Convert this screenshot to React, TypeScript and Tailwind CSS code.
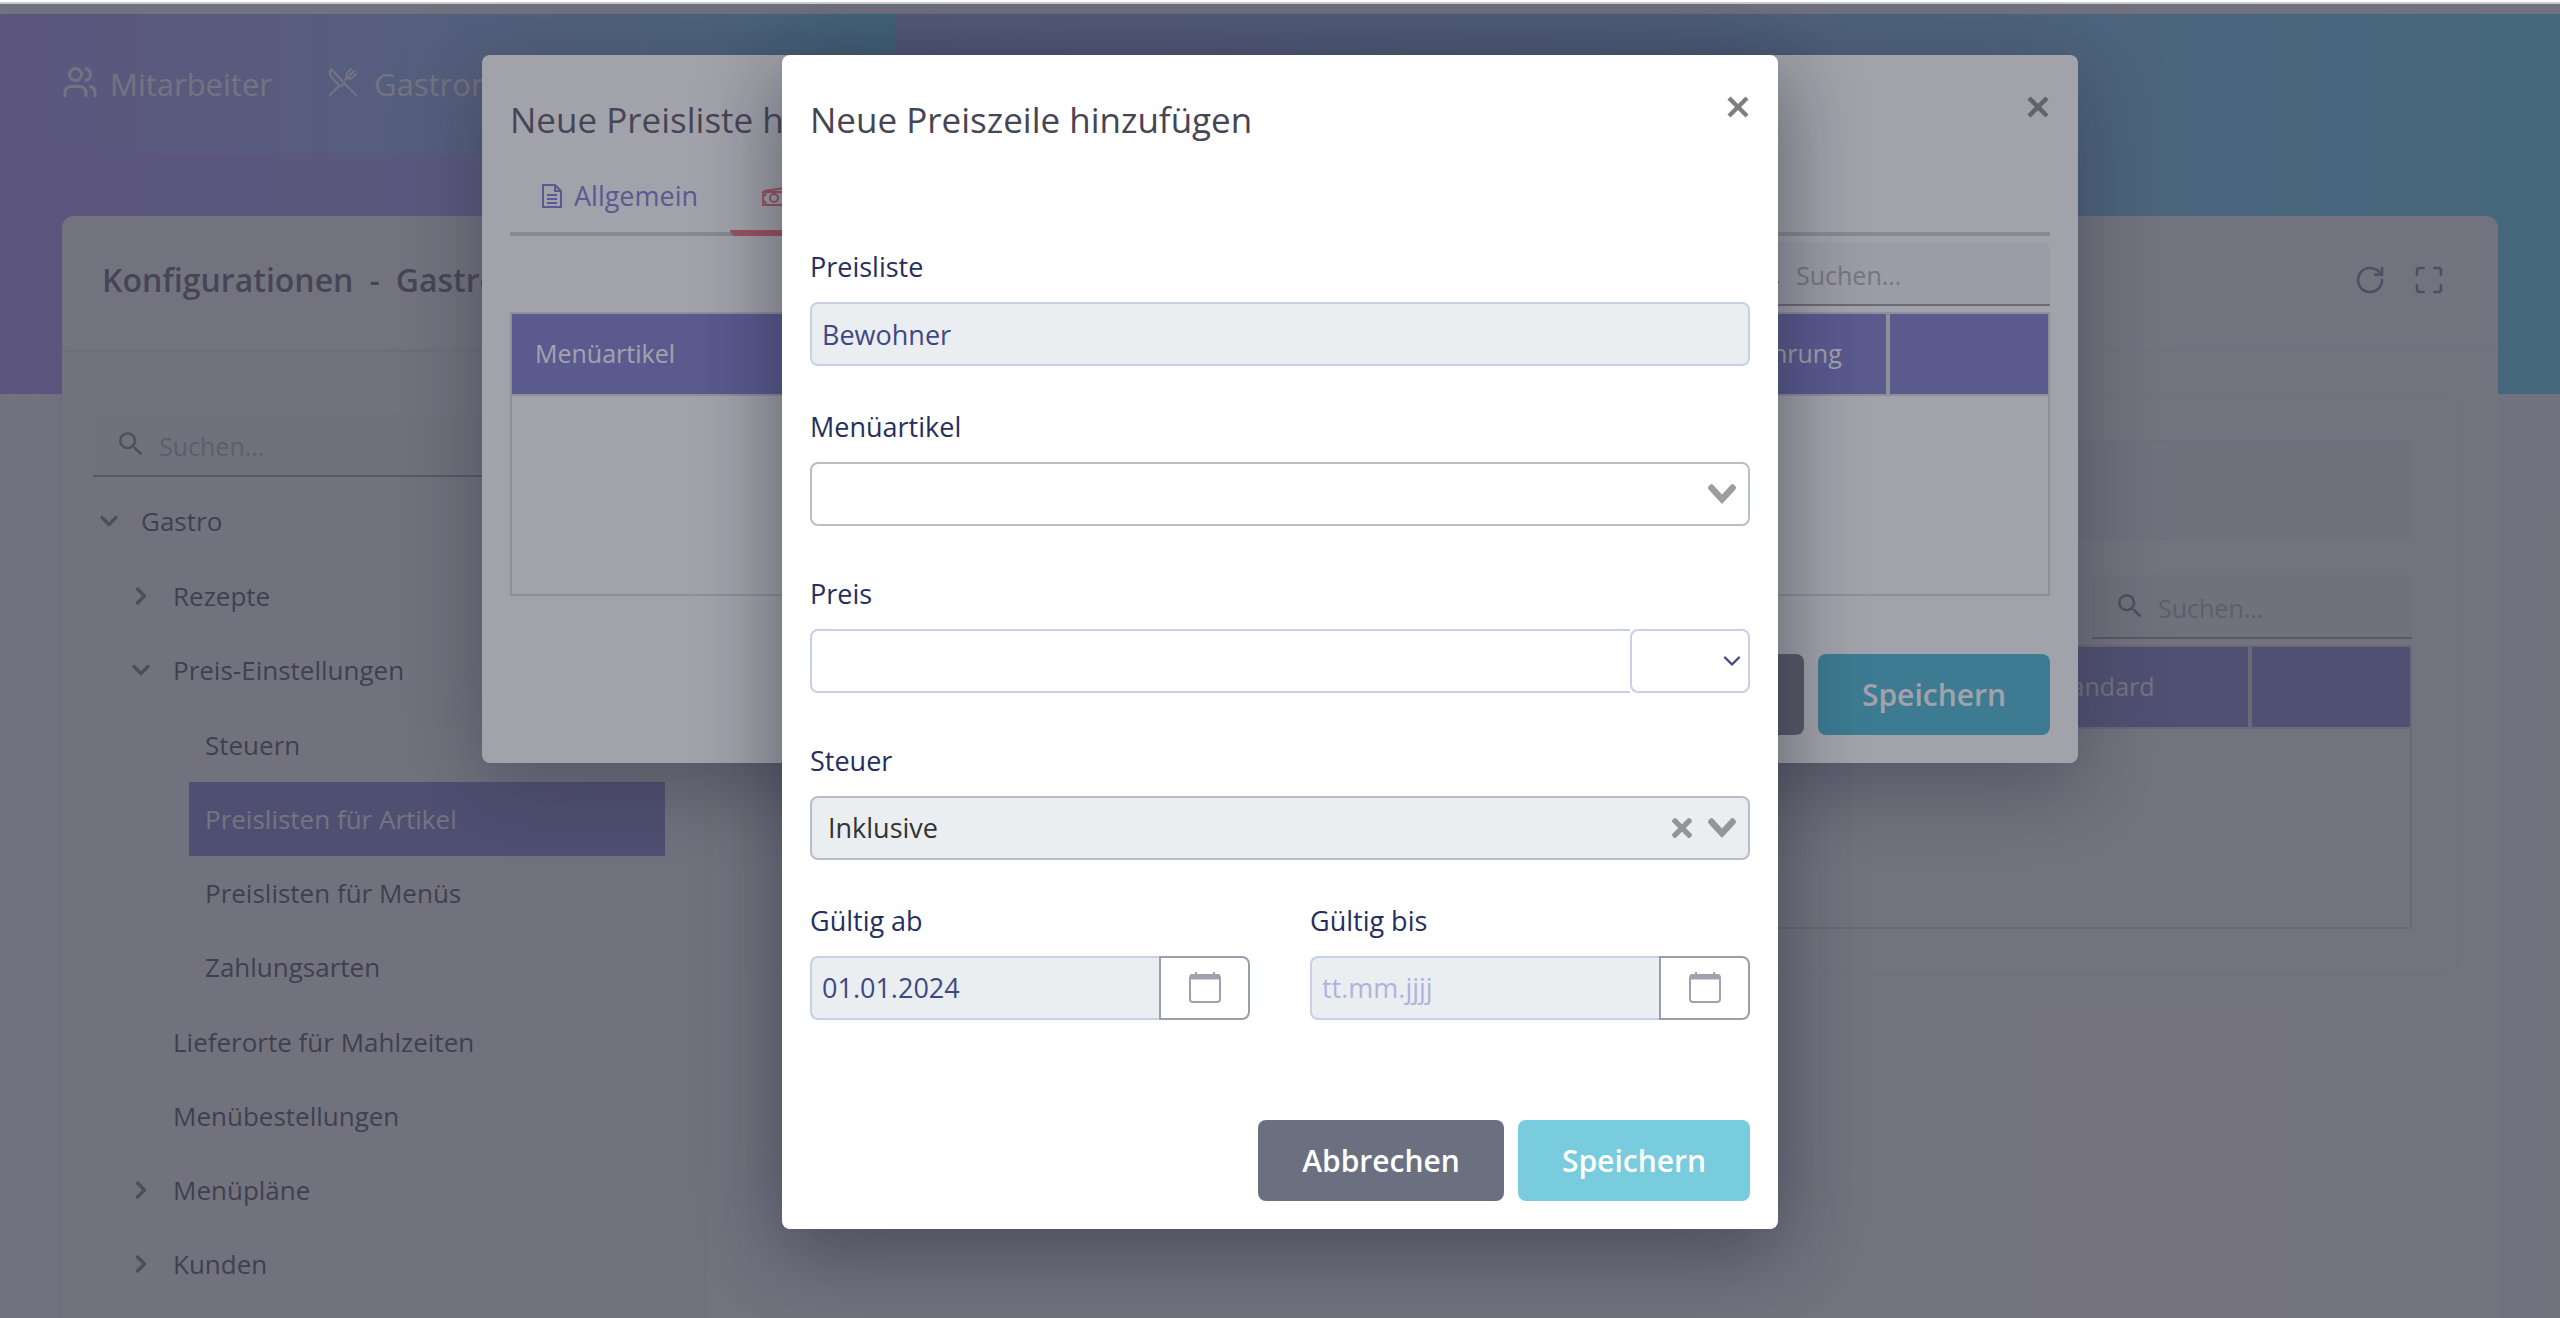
import React from 'react';
import { ChevronDown, ChevronRight, Maximize, RotateCw, Users, X } from 'lucide-react';
import { MdSearch } from 'react-icons/md';

type TreeNode = {
    label: string;
    open?: boolean;
    branch?: boolean;
    selected?: boolean;
    children?: TreeNode[];
};

const tree: TreeNode[] = [
    {
        label: 'Gastro',
        branch: true,
        open: true,
        children: [
            { label: 'Rezepte', branch: true },
            {
                label: 'Preis-Einstellungen',
                branch: true,
                open: true,
                children: [
                    { label: 'Steuern' },
                    { label: 'Preislisten für Artikel', selected: true },
                    { label: 'Preislisten für Menüs' },
                    { label: 'Zahlungsarten' },
                ],
            },
            { label: 'Lieferorte für Mahlzeiten' },
            { label: 'Menübestellungen' },
            { label: 'Menüpläne', branch: true },
            { label: 'Kunden', branch: true },
        ],
    },
];

/* Icons */

function CutleryIcon() {
    return (
        <svg width="30" height="30" viewBox="0 0 30 30" fill="none" stroke="currentColor" strokeWidth="2" strokeLinecap="round" strokeLinejoin="round">
            <path d="M3 2C1 5 2 9 5 12L12 19L17 17Z" />
            <path d="M11 19L2 28M17 17L28 28" />
            <path d="M17 13L19 11C18 9 18 7 20 5L23 2M21 9L26 4M19 11C21 12 23 12 25 10L28 7" />
        </svg>
    );
}

function FileIcon() {
    return (
        <svg width="20" height="24" viewBox="0 0 20 24" fill="none" stroke="currentColor" strokeWidth="2">
            <path d="M1 1H13L19 7V23H1Z" />
            <path d="M13 1V7H19M5 11H15M5 15H15M5 19H15" />
        </svg>
    );
}

function MoneyIcon() {
    return (
        <svg width="36" height="20" viewBox="0 0 36 20" fill="none" stroke="currentColor" strokeWidth="2">
            <path d="M1 6H31V19H1Z" />
            <circle cx="12" cy="12" r="4" />
            <path d="M1 10C3 10 4 8 4 6M1 15C3 15 4 17 4 19M2 5L30 1L31 6" />
        </svg>
    );
}

function CalendarIcon() {
    return (
        <svg width="32" height="32" viewBox="0 0 32 32" fill="none" stroke="currentColor" strokeWidth="2">
            <rect x="1" y="3" width="30" height="27" rx="3" />
            <path d="M1 5H31" strokeWidth="5" />
            <path d="M7 0V4M25 0V4" />
        </svg>
    );
}

function SelectArrow() {
    return (
        <svg width="28" height="20" viewBox="0 0 14 10" fill="currentColor">
            <path d="M9.211364 7.59931l4.48338-4.867229c.407008-.441854.407008-1.158247 0-1.60046l-.73712-.80023c-.407008-.441854-1.066904-.441854-1.474243 0L7 5.198617 2.51662.33139c-.407008-.441853-1.066904-.441853-1.474243 0l-.737121.80023c-.407008.441854-.407008 1.158248 0 1.600461l4.48338 4.867228L7 10l2.211364-2.40069z" />
        </svg>
    );
}

function ClearIcon() {
    return (
        <svg width="20" height="20" viewBox="0 0 10 10" fill="currentColor">
            <path d="M6.895455 5l2.842897-2.842898c.348864-.348863.348864-.914488 0-1.263636L9.106534.261648c-.348864-.348864-.914489-.348864-1.263636 0L5 3.104545 2.157102.261648c-.348863-.348864-.914488-.348864-1.263636 0L.261648.893466c-.348864.348864-.348864.914489 0 1.263636L3.104545 5 .261648 7.842898c-.348864.348863-.348864.914488 0 1.263636l.631818.631818c.348864.348864.914773.348864 1.263636 0L5 6.895455l2.842898 2.842897c.348863.348864.914772.348864 1.263636 0l.631818-.631818c.348864-.348864.348864-.914489 0-1.263636L6.895455 5z" />
        </svg>
    );
}

/* Shared pieces */

function SearchBox({ className = '' }: { className?: string }) {
    return (
        <label className={`flex h-16 items-center gap-3 rounded-t-lg border-b-2 border-[#8d9098] bg-[#f0f2f5] pl-[22px] text-[#6c6e76] ${className}`}>
            <MdSearch size={32} className="shrink-0" />
            <input type="search" placeholder="Suchen..." aria-label="Suchen" className="w-full min-w-0 bg-transparent pt-1.5 text-[25px] outline-none placeholder:text-[#a3a6ac]" />
        </label>
    );
}

function DataTable({ columns }: { columns: { label: string; width: string }[] }) {
    return (
        <div className="mt-1.5 border-2 border-[#d5d8dc]">
            <table className="w-full table-fixed border-separate border-spacing-0 text-left">
                <thead>
                    <tr>
                        {columns.map((column, i) => (
                            <th
                                key={i}
                                className={`h-20 border-[#d5d8dc] bg-[#6f6ec9] px-[23px] text-[25px] font-normal text-white ${column.width} ${i < columns.length - 1 && i > 0 ? 'border-r-4' : ''}`}
                            >
                                {column.label}
                            </th>
                        ))}
                    </tr>
                </thead>
                <tbody>
                    <tr>
                        <td colSpan={columns.length} className="h-50 border-t-2 border-[#d5d8dc]" />
                    </tr>
                </tbody>
            </table>
        </div>
    );
}

function Modal({ title, width, children }: { title: string; width: string; children: React.ReactNode }) {
    return (
        <div className="absolute inset-0 flex items-start justify-center overflow-hidden bg-[#464555]/50 pt-[51px]">
            <section role="dialog" aria-label={title} className={`w-full rounded-lg bg-white pb-7 shadow-[0_30px_70px_rgba(40,40,60,0.28),0_10px_90px_rgba(20,20,35,0.28)] ${width}`}>
                <header className="flex items-start justify-between pt-[34px] pr-[22px] pl-7">
                    <h2 className="mt-[7px] text-[35px] leading-12 text-[#464555]">{title}</h2>
                    <button type="button" aria-label="Schließen" className="text-[#7f7f7f]">
                        <X size={36} strokeWidth={3} strokeLinecap="butt" />
                    </button>
                </header>
                <div className="px-7">{children}</div>
            </section>
        </div>
    );
}

function ModalActions({ disabled = false }: { disabled?: boolean }) {
    return (
        <footer className="flex justify-end gap-3.5 text-[30px] font-semibold text-white">
            <button type="button" className="h-[81px] w-[246px] rounded-lg bg-[#6b7080]">Abbrechen</button>
            <button type="submit" disabled={disabled} className="h-[81px] w-[232px] rounded-lg bg-[#33b1cc] disabled:opacity-65">Speichern</button>
        </footer>
    );
}

function Tree({ nodes }: { nodes: TreeNode[] }) {
    return (
        <ul className="py-px">
            {nodes.map((node) => (
                <li key={node.label}>
                    <div className="flex h-[74px]">
                        <span className="flex w-8 items-center justify-center text-[#62646e]">
                            {node.branch && (node.open ? <ChevronDown size={28} strokeWidth={3} /> : <ChevronRight size={28} strokeWidth={3} />)}
                        </span>
                        <button
                            type="button"
                            className={`flex-1 pl-4 text-left text-[26px] ${node.selected ? 'bg-[#6c6cc6] text-white' : 'text-[#2a2e3c]'}`}
                        >
                            {node.label}
                        </button>
                    </div>
                    {node.children && (
                        <div className="pl-8">
                            <Tree nodes={node.children} />
                        </div>
                    )}
                </li>
            ))}
        </ul>
    );
}

/* Page behind the dialogs */

function ConfigurationPage() {
    return (
        <div className="bg-[#f5f7fb] pt-2.5">
            <div className="h-[380px] bg-linear-to-r from-[#a285f9] to-[#3ecdf1]">
                <nav className="flex h-[140px] w-[35%] items-center gap-14 bg-linear-to-r from-[#a285f9] to-[#3ecdf1] pb-1 pl-[62px] text-[31px] text-white">
                    <a href="#mitarbeiter" className="flex items-center gap-3">
                        <Users size={36} strokeWidth={2} />
                        <span className="pt-1">Mitarbeiter</span>
                    </a>
                    <a href="#gastronomie" className="flex items-center gap-4">
                        <CutleryIcon />
                        <span className="pt-1">Gastronomie</span>
                    </a>
                </nav>
            </div>

            <main className="mx-[62px] -mt-[178px] min-h-screen rounded-t-xl bg-[#fdfdfe]">
                <header className="flex h-[136px] items-center justify-between border-b-2 border-[#f1f2f6] pr-[53px] pb-1.5 pl-10">
                    <h1 className="flex gap-4 text-[32px] font-semibold text-[#464555]">
                        <span>Konfigurationen</span>
                        <span>-</span>
                        <span>Gastronomie</span>
                    </h1>
                    <div className="flex gap-[27px] text-[#63708a]">
                        <button type="button" aria-label="Aktualisieren"><RotateCw size={32} /></button>
                        <button type="button" aria-label="Vollbild"><Maximize size={32} /></button>
                    </div>
                </header>

                <div className="flex">
                    <aside className="min-h-screen w-[642px] shrink-0 bg-[#f6f8fb] pt-[61px] pr-[39px] pl-[31px] shadow-[0_0_8px_rgba(40,40,70,0.15)]">
                        <SearchBox />
                        <div className="mt-1.5">
                            <Tree nodes={tree} />
                        </div>
                    </aside>

                    <div className="flex-1 pt-[45px] pr-[42px] pl-[43px]">
                        <section className="rounded-lg px-11 pt-[43px] pb-[43px] shadow-[0_0_6px_rgba(60,60,90,0.07)]">
                            <div className="h-[100px] rounded-lg border-2 border-[#ebeef2] bg-[#edf2f4]" />
                            <SearchBox className="mt-[35px] ml-auto w-80" />
                            <DataTable
                                columns={[
                                    { label: 'Name', width: '' },
                                    { label: 'Standard', width: 'w-[227px]' },
                                    { label: '', width: 'w-[158px]' },
                                ]}
                            />
                        </section>
                    </div>
                </div>
            </main>
        </div>
    );
}

function PriceListModal() {
    return (
        <Modal title="Neue Preisliste hinzufügen" width="max-w-[1596px]">
            <nav className="mt-4 flex border-b-4 border-[#c8ccd0] text-[27px]">
                <button type="button" className="flex h-[72px] items-center gap-3 px-8 text-[#6f6ed0]">
                    <FileIcon />
                    Allgemein
                </button>
                <button type="button" className="relative flex h-[72px] items-center gap-3 px-8 text-[#ee636d]">
                    <MoneyIcon />
                    Preise
                    <span className="absolute inset-x-0 -bottom-1 h-1.5 rounded-b-lg bg-[#ee636d]" />
                </button>
            </nav>
            <SearchBox className="mt-1.5 ml-auto w-80" />
            <DataTable
                columns={[
                    { label: 'Menüartikel', width: '' },
                    { label: 'Währung', width: 'w-[178px]' },
                    { label: '', width: 'w-[158px]' },
                ]}
            />
            <div className="mt-[58px]">
                <ModalActions />
            </div>
        </Modal>
    );
}

function DateField({ id, label, value }: { id: string; label: string; value?: string }) {
    return (
        <div className="flex-1">
            <label htmlFor={id} className="block leading-[42px] text-[#252f5f]">{label}</label>
            <div className="mt-3.5 flex h-16">
                <input
                    id={id}
                    type="text"
                    defaultValue={value}
                    placeholder="tt.mm.jjjj"
                    className="w-full min-w-0 rounded-l-lg border-2 border-r-0 border-[#c8cfe6] bg-[#eaeef1] px-2.5 text-[#3f4785] placeholder:text-[#adb5dc]"
                />
                <button type="button" aria-label={`${label} wählen`} className="flex w-[91px] shrink-0 items-center justify-center rounded-r-lg border-2 border-[#9a9dab] text-[#9fa2ae]">
                    <CalendarIcon />
                </button>
            </div>
        </div>
    );
}

function PriceRowModal() {
    return (
        <Modal title="Neue Preiszeile hinzufügen" width="max-w-[996px]">
            <form className="pt-[102px] text-[27px]">
                <label htmlFor="preisliste" className="block leading-[42px] text-[#252f5f]">Preisliste</label>
                <input
                    id="preisliste"
                    type="text"
                    readOnly
                    value="Bewohner"
                    className="mt-3.5 block h-16 w-full rounded-lg border-2 border-[#c8cfe6] bg-[#eaeef1] px-2.5 text-[#3f4785]"
                />

                <label htmlFor="menuartikel" className="mt-10 block leading-[42px] text-[#252f5f]">Menüartikel</label>
                <div className="relative mt-3.5">
                    <select id="menuartikel" className="block h-16 w-full appearance-none rounded-lg border-2 border-[#b8bdc8] bg-white px-4 text-[#333]">
                        <option value=""></option>
                    </select>
                    <span className="pointer-events-none absolute inset-y-0 right-3.5 flex items-center text-[#9d9d9d]">
                        <SelectArrow />
                    </span>
                </div>

                <label htmlFor="preis" className="mt-[47px] block leading-[42px] text-[#252f5f]">Preis</label>
                <div className="mt-3.5 flex h-16">
                    <input id="preis" type="text" className="min-w-0 flex-1 rounded-l-lg border-2 border-r-0 border-[#c8cfe6] px-2.5 text-[#3f4785]" />
                    <div className="relative w-[120px]">
                        <select aria-label="Währung" className="h-16 w-full appearance-none rounded-lg border-2 border-[#c8cfe6] bg-white px-2.5 text-[#3f4785]">
                            <option value=""></option>
                        </select>
                        <span className="pointer-events-none absolute inset-y-0 right-1 flex items-center text-[#3f4785]">
                            <ChevronDown size={28} strokeWidth={2} />
                        </span>
                    </div>
                </div>

                <label htmlFor="steuer" className="mt-[47px] block leading-[42px] text-[#252f5f]">Steuer</label>
                <div className="relative mt-3.5">
                    <select id="steuer" defaultValue="inklusive" className="block h-16 w-full appearance-none rounded-lg border-2 border-[#b8bdc8] bg-[#eaeef1] px-4 text-[#333]">
                        <option value="inklusive">Inklusive</option>
                    </select>
                    <div className="pointer-events-none absolute inset-y-0 right-3.5 flex items-center gap-4 text-[#939597]">
                        <button type="button" aria-label="Auswahl löschen" className="pointer-events-auto">
                            <ClearIcon />
                        </button>
                        <SelectArrow />
                    </div>
                </div>

                <div className="mt-10 mb-[100px] flex gap-15">
                    <DateField id="gueltig-ab" label="Gültig ab" value="01.01.2024" />
                    <DateField id="gueltig-bis" label="Gültig bis" />
                </div>

                <ModalActions disabled />
            </form>
        </Modal>
    );
}

export default function App() {
    return (
        <div className="flex h-screen flex-col overflow-hidden border-t-2 border-white font-['Open_Sans',sans-serif]">
            <div className="relative flex-1 overflow-hidden border-t-2 border-[#c9cacb]">
                <ConfigurationPage />
                <PriceListModal />
                <PriceRowModal />
            </div>
        </div>
    );
}
